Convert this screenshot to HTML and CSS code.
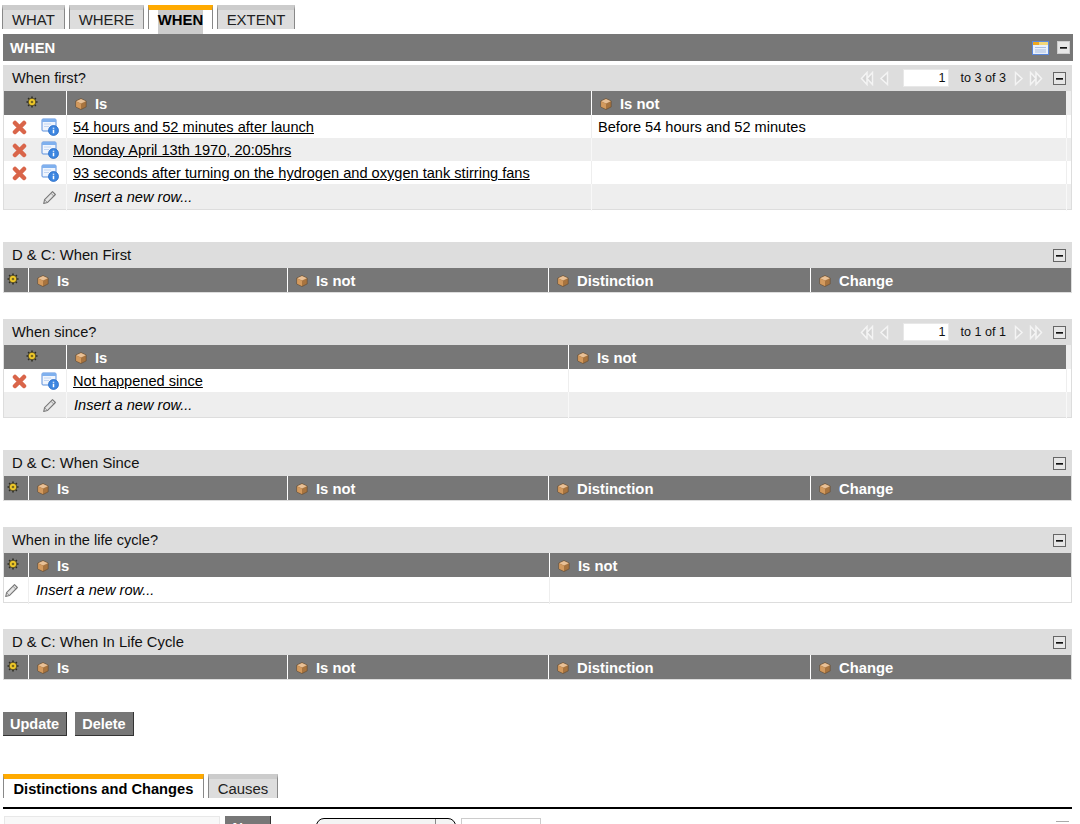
FILE: index.html
```html
<!DOCTYPE html>
<html lang="en">
<head>
<meta charset="utf-8">
<title>WHEN</title>
<link rel="stylesheet" href="styles.css">
</head>
<body>
<svg class="defs" width="0" height="0" aria-hidden="true">
  <symbol id="box" viewBox="0 0 12 12">
    <path d="M6 .6 11.200 3.100V8.900L6 11.500 .8 8.900V3.100Z" fill="#a8743f" stroke="#5e4a34" stroke-width=".6"/>
    <path d="M1.100 3.200 6 5.500 10.900 3.200 6 .9Z" fill="#e8c096"/>
    <path d="M1.100 3.500 6 5.800V11.100L1.100 8.700Z" fill="#d39a5e"/>
  </symbol>
  <symbol id="gear" viewBox="0 0 12 12">
    <path d="M6 .5V11.5M.5 6H11.500M2.100 2.100 9.900 9.900M9.900 2.100 2.100 9.900" stroke="#2a2a22" stroke-width="1.500" stroke-dasharray="1.600 .8"/>
    <circle cx="6" cy="6" r="3.800" fill="#eec82a" stroke="#3a3420" stroke-width=".8"/>
    <circle cx="6" cy="6" r="1.300" fill="#7a6a20"/>
  </symbol>
  <symbol id="del" viewBox="0 0 14 14">
    <path d="M2.800 2.800 11.200 11.200M11.200 2.800 2.800 11.200" stroke="#d9654a" stroke-width="4.200" stroke-linecap="round"/>
  </symbol>
  <symbol id="info" viewBox="0 0 18 18">
    <rect x="1" y="1" width="14" height="12" rx="1" fill="#f0f5fd" stroke="#5b8fdc"/>
    <rect x="1" y="1" width="14" height="3" fill="#7fb0ee"/>
    <path d="M3 6H10M3 8.500H8" stroke="#c3d6f2"/>
    <circle cx="12.500" cy="12.500" r="5" fill="#3d86e0" stroke="#1b62c0" stroke-width=".7"/>
    <path d="M12.500 9.800V10.700M12.500 11.700V15.200" stroke="#fff" stroke-width="1.500"/>
  </symbol>
  <symbol id="pencil" viewBox="0 0 14 14">
    <path d="M9.800 1.500 12.500 4.200 5 11.700 1.600 12.600 2.400 9Z" fill="#e4e4e4" stroke="#777" stroke-linejoin="round"/>
    <path d="M8.300 3 11 5.700M2.400 9 5 11.700" stroke="#888" stroke-width=".8"/>
  </symbol>
  <symbol id="win" viewBox="0 0 17 14">
    <rect x=".5" y=".5" width="16" height="13" fill="#e9f0fb" stroke="#5a88dc"/>
    <rect x="1" y="1" width="15" height="3" fill="#f3d77a"/>
    <rect x="1" y="1" width="6" height="3" fill="#f0a81e"/>
    <path d="M3 6.500H14M3 9H14M3 11H14" stroke="#a9bde0"/>
  </symbol>
  <symbol id="first" viewBox="0 0 14 15">
    <path d="M7 1.500 1.500 7.500 7 13.500Z M12.500 1.500 7 7.500 12.500 13.500Z" fill="#d4d4d4" stroke="#f4f4f4" stroke-width="1.500"/>
  </symbol>
  <symbol id="prev" viewBox="0 0 10 15">
    <path d="M8.500 1.500 2 7.500 8.500 13.500Z" fill="#d4d4d4" stroke="#f4f4f4" stroke-width="1.500"/>
  </symbol>
  <symbol id="next" viewBox="0 0 10 15">
    <path d="M1.500 1.500 8 7.500 1.500 13.500Z" fill="#d4d4d4" stroke="#f4f4f4" stroke-width="1.500"/>
  </symbol>
  <symbol id="last" viewBox="0 0 14 15">
    <path d="M7 1.500 12.500 7.500 7 13.500Z M1.500 1.500 7 7.500 1.500 13.500Z" fill="#d4d4d4" stroke="#f4f4f4" stroke-width="1.500"/>
  </symbol>
</svg>

<nav class="tabs tabs-top">
  <a class="tab">WHAT</a>
  <a class="tab">WHERE</a>
  <a class="tab tab-on tab-focus"><span>WHEN</span></a>
  <a class="tab tab-extent">EXTENT</a>
</nav>

<header class="mainbar">
  <span>WHEN</span>
  <span class="mainbar-tools">
    <svg class="i-win"><use href="#win"/></svg>
    <span class="min min-bar"></span>
  </span>
</header>

<section class="sec gap-32">
  <div class="sec-head">
    <span>When first?</span>
    <span class="pager">
      <svg class="i-dbl"><use href="#first"/></svg>
      <svg class="i-one"><use href="#prev"/></svg>
      <span class="page-box">1</span>
      <span class="page-txt">to 3 of 3</span>
      <svg class="i-one i-next"><use href="#next"/></svg>
      <svg class="i-dbl"><use href="#last"/></svg>
    </span>
    <span class="min"></span>
  </div>
  <div class="grid g-first head">
    <div class="c c-gear"><svg class="i-gear"><use href="#gear"/></svg></div>
    <div class="c"><svg class="i-box"><use href="#box"/></svg>Is</div>
    <div class="c"><svg class="i-box"><use href="#box"/></svg>Is not</div>
    <div class="c c-end"></div>
  </div>
  <div class="grid g-first row">
    <div class="c c-act"><svg class="i-del"><use href="#del"/></svg><svg class="i-info"><use href="#info"/></svg></div>
    <div class="c"><a class="lnk">54 hours and 52 minutes after launch</a></div>
    <div class="c">Before 54 hours and 52 minutes</div>
    <div class="c"></div>
  </div>
  <div class="grid g-first row alt">
    <div class="c c-act"><svg class="i-del"><use href="#del"/></svg><svg class="i-info"><use href="#info"/></svg></div>
    <div class="c"><a class="lnk">Monday April 13th 1970, 20:05hrs</a></div>
    <div class="c"></div>
    <div class="c"></div>
  </div>
  <div class="grid g-first row">
    <div class="c c-act"><svg class="i-del"><use href="#del"/></svg><svg class="i-info"><use href="#info"/></svg></div>
    <div class="c"><a class="lnk">93 seconds after turning on the hydrogen and oxygen tank stirring fans</a></div>
    <div class="c"></div>
    <div class="c"></div>
  </div>
  <div class="grid g-first row alt ins">
    <div class="c c-pen"><svg class="i-pen"><use href="#pencil"/></svg></div>
    <div class="c"><em>Insert a new row...</em></div>
    <div class="c"></div>
    <div class="c"></div>
  </div>
</section>

<section class="sec gap-26">
  <div class="sec-head sec-head-dc"><span>D &amp; C: When First</span><span class="min"></span></div>
  <div class="grid g-dc head">
    <div class="c c-gear"><svg class="i-gear"><use href="#gear"/></svg></div>
    <div class="c"><svg class="i-box"><use href="#box"/></svg>Is</div>
    <div class="c"><svg class="i-box"><use href="#box"/></svg>Is not</div>
    <div class="c"><svg class="i-box"><use href="#box"/></svg>Distinction</div>
    <div class="c"><svg class="i-box"><use href="#box"/></svg>Change</div>
  </div>
</section>

<section class="sec gap-32">
  <div class="sec-head">
    <span>When since?</span>
    <span class="pager">
      <svg class="i-dbl"><use href="#first"/></svg>
      <svg class="i-one"><use href="#prev"/></svg>
      <span class="page-box">1</span>
      <span class="page-txt">to 1 of 1</span>
      <svg class="i-one i-next"><use href="#next"/></svg>
      <svg class="i-dbl"><use href="#last"/></svg>
    </span>
    <span class="min"></span>
  </div>
  <div class="grid g-since head">
    <div class="c c-gear"><svg class="i-gear"><use href="#gear"/></svg></div>
    <div class="c"><svg class="i-box"><use href="#box"/></svg>Is</div>
    <div class="c"><svg class="i-box"><use href="#box"/></svg>Is not</div>
    <div class="c c-end"></div>
  </div>
  <div class="grid g-since row">
    <div class="c c-act"><svg class="i-del"><use href="#del"/></svg><svg class="i-info"><use href="#info"/></svg></div>
    <div class="c"><a class="lnk">Not happened since</a></div>
    <div class="c"></div>
    <div class="c"></div>
  </div>
  <div class="grid g-since row alt ins">
    <div class="c c-pen"><svg class="i-pen"><use href="#pencil"/></svg></div>
    <div class="c"><em>Insert a new row...</em></div>
    <div class="c"></div>
    <div class="c"></div>
  </div>
</section>

<section class="sec gap-26">
  <div class="sec-head sec-head-dc"><span>D &amp; C: When Since</span><span class="min"></span></div>
  <div class="grid g-dc head">
    <div class="c c-gear"><svg class="i-gear"><use href="#gear"/></svg></div>
    <div class="c"><svg class="i-box"><use href="#box"/></svg>Is</div>
    <div class="c"><svg class="i-box"><use href="#box"/></svg>Is not</div>
    <div class="c"><svg class="i-box"><use href="#box"/></svg>Distinction</div>
    <div class="c"><svg class="i-box"><use href="#box"/></svg>Change</div>
  </div>
</section>

<section class="sec gap-26">
  <div class="sec-head"><span>When in the life cycle?</span><span class="min"></span></div>
  <div class="grid g-life head">
    <div class="c c-gear"><svg class="i-gear"><use href="#gear"/></svg></div>
    <div class="c"><svg class="i-box"><use href="#box"/></svg>Is</div>
    <div class="c"><svg class="i-box"><use href="#box"/></svg>Is not</div>
  </div>
  <div class="grid g-life row ins">
    <div class="c c-pen"><svg class="i-pen"><use href="#pencil"/></svg></div>
    <div class="c"><em>Insert a new row...</em></div>
    <div class="c"></div>
  </div>
</section>

<section class="sec gap-32">
  <div class="sec-head sec-head-dc"><span>D &amp; C: When In Life Cycle</span><span class="min"></span></div>
  <div class="grid g-dc head">
    <div class="c c-gear"><svg class="i-gear"><use href="#gear"/></svg></div>
    <div class="c"><svg class="i-box"><use href="#box"/></svg>Is</div>
    <div class="c"><svg class="i-box"><use href="#box"/></svg>Is not</div>
    <div class="c"><svg class="i-box"><use href="#box"/></svg>Distinction</div>
    <div class="c"><svg class="i-box"><use href="#box"/></svg>Change</div>
  </div>
</section>

<div class="actions">
  <button class="btn" type="button">Update</button>
  <button class="btn" type="button">Delete</button>
</div>

<nav class="tabs tabs-lower">
  <a class="tab tab-on tab-dist">Distinctions and Changes</a>
  <a class="tab tab-causes">Causes</a>
</nav>

<div class="rule"></div>

<div class="lower-row">
  <span class="lower-input"></span>
  <button class="btn btn-new" type="button">New</button>
  <span class="lower-select"><span class="lower-arrow"></span></span>
  <span class="lower-box"></span>
  <span class="lower-min"></span>
</div>
</body>
</html>
```

FILE: styles.css
```css
html, body {
  margin: 0;
  padding: 0;
  height: 824px;
  overflow: hidden;
  background: #fff;
}
body {
  padding-top: 5px;
  box-sizing: border-box;
  font-family: "Liberation Sans", Arial, sans-serif;
  font-size: 14.6px;
  color: #000;
}
.defs { position: absolute; }
svg { display: block; flex: none; }

/* tabs */
.tabs { display: flex; height: 24px; }
.tabs-top { margin-left: 2px; gap: 4px; }
.tabs-lower { margin: 38px 0 0 3px; gap: 4px; }
.tab {
  box-sizing: border-box;
  height: 24px;
  padding: 0 9px;
  background: #ddd;
  border-top: 5px solid #ccc;
  border-left: 1px solid #888;
  border-right: 1px solid #888;
  line-height: 20px;
  font-size: 14.9px;
  color: #222;
  white-space: nowrap;
}
.tab-on {
  background: #fff;
  border-top-color: #fa0;
  font-weight: bold;
  color: #000;
}
.tab-focus { padding: 0 8.5px; }
.tab-focus span {
  display: block;
  height: 24px;
  background: #ccc;
}
.tab-dist { padding: 0 9.5px; font-size: 14.65px; }

/* main bar */
.mainbar {
  display: flex;
  align-items: center;
  justify-content: space-between;
  box-sizing: border-box;
  height: 27px;
  margin: 5px 7px 4px 3px;
  padding: 0 3px 0 7px;
  background: #777;
  color: #fff;
  font-weight: bold;
  font-size: 14.8px;
}
.mainbar-tools { display: flex; align-items: center; gap: 8px; }
.i-win { width: 17px; height: 14px; }

.min {
  box-sizing: border-box;
  display: flex;
  align-items: center;
  justify-content: center;
  width: 13px;
  height: 13px;
  margin-left: 10px;
  border: 1px solid #666;
  background: #e6e6e6;
}
.min::before {
  content: "";
  width: 7px;
  height: 1px;
  background: #111;
  box-shadow: 0 1px 0 #555;
}
.min-bar { margin-left: 0; border-color: #ccc; }

/* sections */
.sec {
  box-sizing: border-box;
  width: 1069px;
  margin-left: 3px;
  border: 1px solid #ddd;
  border-top: 0;
}
.gap-32 { margin-bottom: 32px; }
.gap-26 { margin-bottom: 26px; }
.sec-head {
  display: flex;
  align-items: center;
  height: 26px;
  margin: 0 -1px;
  padding: 0 6px 0 9px;
  background: #ddd;
  color: #111;
}
.sec-head-dc { font-size: 14.8px; }
.sec-head > span:first-child { margin-right: auto; }

.pager { display: flex; align-items: center; font-size: 12.6px; }
.i-dbl { width: 14px; height: 15px; }
.i-one { width: 10px; height: 15px; margin-left: 5px; }
.i-next { margin: 0 5px 0 8px; }
.page-box {
  box-sizing: border-box;
  width: 46px;
  height: 18px;
  margin: 0 11px 0 14px;
  padding-right: 3px;
  background: #fff;
  border: 1px solid #e8e8e8;
  text-align: right;
  line-height: 16px;
}
.page-txt { color: #111; }

/* grids */
.grid { display: grid; }
.g-first { grid-template-columns: 62px 525px 475px 5px; }
.g-since { grid-template-columns: 62px 502px 498px 5px; }
.g-dc { grid-template-columns: 24px 259px 261px 262px 261px; }
.g-life { grid-template-columns: 24px 521px 522px; }

.head {
  height: 24px;
  background: #777;
  color: #fff;
  font-weight: bold;
  font-size: 14.8px;
}
.head .c {
  box-sizing: border-box;
  display: flex;
  align-items: center;
  height: 24px;
  padding: 2px 0 0 8px;
  border-left: 1px solid #fff;
}
.head .c.c-gear { justify-content: center; border-left: 0; padding: 0 6px 0 0; }
.head .c.c-end { background: #eee; border-left: 0; padding: 0; }
.c-gear .i-gear { margin-top: -3px; }
.i-box { width: 12px; height: 12px; margin: 0 8px 0 0; }
.i-gear { width: 12px; height: 12px; }

.row { height: 23px; background: #fff; }
.alt { background: #eee; }
.ins { height: 25px; }
.row .c {
  box-sizing: border-box;
  padding-left: 6px;
  border-left: 1px solid #eee;
  line-height: 25px;
  white-space: nowrap;
}
.row.alt .c { border-left-color: #f8f8f8; }
.row.ins .c { line-height: 27px; padding-left: 7px; }
.row .c.c-act { display: flex; align-items: center; gap: 14px; padding-left: 8px; border-left: 0; }
.row.ins .c.c-pen { display: flex; align-items: center; justify-content: flex-end; padding: 0 9px 0 0; border-left: 0; }
.lnk { color: #000; text-decoration: underline; }
.i-del { width: 15px; height: 15px; }
.i-info { width: 18px; height: 18px; margin-top: -1px; }
.i-pen { width: 15px; height: 15px; }

/* actions */
.actions { display: flex; gap: 8px; margin-left: 3px; }
.btn {
  box-sizing: border-box;
  height: 24px;
  padding: 0 7px;
  border: 0;
  border-right: 1px solid #333;
  border-bottom: 1px solid #333;
  background: #777;
  color: #fff;
  font: bold 14.5px "Liberation Sans", Arial, sans-serif;
}

.rule { height: 2px; margin: 9px 8px 0 3px; background: #000; }

.lower-row { display: flex; align-items: flex-start; margin: 7px 0 0 4px; }
.lower-input {
  box-sizing: border-box;
  width: 216px;
  height: 24px;
  background: #f8f8f8;
  border: 1px solid #e8e8e8;
}
.btn-new { width: 46px; margin-left: 5px; padding: 0; }
.lower-select {
  display: flex;
  justify-content: flex-end;
  box-sizing: border-box;
  width: 140px;
  height: 22px;
  margin: 2px 0 0 45px;
  border: 1px solid #000;
  border-radius: 8px;
  background: #f4f4f4;
}
.lower-arrow { width: 19px; border-left: 1px solid #888; }
.lower-box {
  box-sizing: border-box;
  width: 80px;
  height: 22px;
  margin: 2px 0 0 5px;
  border: 1px solid #ccc;
}
.lower-min {
  width: 13px;
  height: 1px;
  margin: 5px 0 0 515px;
  background: #aaa;
}
```
